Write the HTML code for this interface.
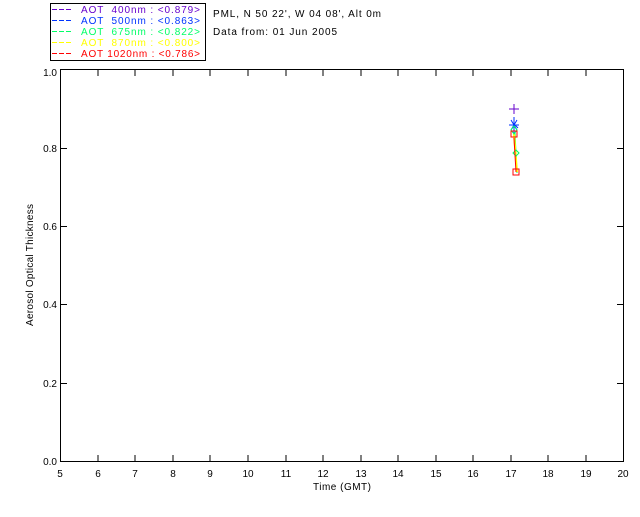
<!DOCTYPE html>
<html><head><style>
body{margin:0;background:#fff;width:640px;height:512px;overflow:hidden}
svg text{font-family:"Liberation Sans",sans-serif;font-size:10px}
</style></head><body>
<svg width="640" height="512" xmlns="http://www.w3.org/2000/svg">
<rect x="50.5" y="3.5" width="155" height="57" fill="none" stroke="#000"/>
<g stroke-dasharray="5,2" fill="none">
<path d="M52 9.5h21" stroke="#6600cc"/><path d="M52 20.5h21" stroke="#0033ff"/>
<path d="M52 31.5h21" stroke="#00ff66"/><path d="M52 42.5h21" stroke="#ffff00"/>
<path d="M52 53.5h21" stroke="#ff0000"/>
</g>
<g font-size="10" lengthAdjust="spacing">
<text x="81" y="13" fill="#6600cc" textLength="119" xml:space="preserve">AOT  400nm : &lt;0.879&gt;</text>
<text x="81" y="24" fill="#0033ff" textLength="119" xml:space="preserve">AOT  500nm : &lt;0.863&gt;</text>
<text x="81" y="35" fill="#00ff66" textLength="119" xml:space="preserve">AOT  675nm : &lt;0.822&gt;</text>
<text x="81" y="46" fill="#ffff00" textLength="119" xml:space="preserve">AOT  870nm : &lt;0.800&gt;</text>
<text x="81" y="57" fill="#ff0000" textLength="119" xml:space="preserve">AOT 1020nm : &lt;0.786&gt;</text>
<text x="213" y="17" fill="#000" textLength="168">PML, N 50 22', W 04 08', Alt 0m</text>
<text x="213" y="35" fill="#000" textLength="124">Data from: 01 Jun 2005</text>
</g>
<rect x="60.5" y="69.5" width="563" height="392" fill="none" stroke="#000"/>
<g stroke="#000">
<path d="M98 70v6M135 70v6M173 70v6M210 70v6M248 70v6M286 70v6M323 70v6M361 70v6M398 70v6M436 70v6M473 70v6M511 70v6M548 70v6M586 70v6"/>
<path d="M98 461v-6M135 461v-6M173 461v-6M210 461v-6M248 461v-6M286 461v-6M323 461v-6M361 461v-6M398 461v-6M436 461v-6M473 461v-6M511 461v-6M548 461v-6M586 461v-6"/>
<path d="M61 148.5h6M61 226.5h6M61 304.5h6M61 383.5h6M623 148.5h-6M623 226.5h-6M623 304.5h-6M623 383.5h-6"/>
</g>
<g fill="#000" text-anchor="end">
<text x="57" y="76">1.0</text><text x="57" y="152">0.8</text><text x="57" y="230">0.6</text>
<text x="57" y="308">0.4</text><text x="57" y="387">0.2</text><text x="57" y="465">0.0</text>
</g>
<g fill="#000" text-anchor="middle">
<text x="60" y="477">5</text><text x="98" y="477">6</text><text x="135" y="477">7</text><text x="173" y="477">8</text>
<text x="210" y="477">9</text><text x="248" y="477">10</text><text x="286" y="477">11</text><text x="323" y="477">12</text>
<text x="361" y="477">13</text><text x="398" y="477">14</text><text x="436" y="477">15</text><text x="473" y="477">16</text>
<text x="511" y="477">17</text><text x="548" y="477">18</text><text x="586" y="477">19</text><text x="623" y="477">20</text>
<text x="342" y="490" textLength="58" lengthAdjust="spacing">Time (GMT)</text>
<text transform="translate(33,265) rotate(-90)" textLength="122" lengthAdjust="spacing">Aerosol Optical Thickness</text>
</g>
<g fill="none" stroke-width="1">
<path d="M514 104v10M509 109h10" stroke="#6600cc"/>
<path d="M514 117v16M511 120l6 10M517 120l-6 10M509 125h10M514 124l4 4" stroke="#0033ff"/>
<path d="M515 133l2 40" stroke="#00ff66"/>
<path d="M514 134l3 38" stroke="#ffff00" stroke-width="2"/>
<path d="M514 126l-3 4 3 4 3-4z M516 150l-3 3 3 3 3-3z" stroke="#00ff66"/>
<path d="M514 138l2 34" stroke="#ff0000"/>
<rect x="511" y="131" width="6" height="6" stroke="#ff0000"/>
<rect x="513" y="169" width="6" height="6" stroke="#ff0000"/>
</g>
</svg>
</body></html>
